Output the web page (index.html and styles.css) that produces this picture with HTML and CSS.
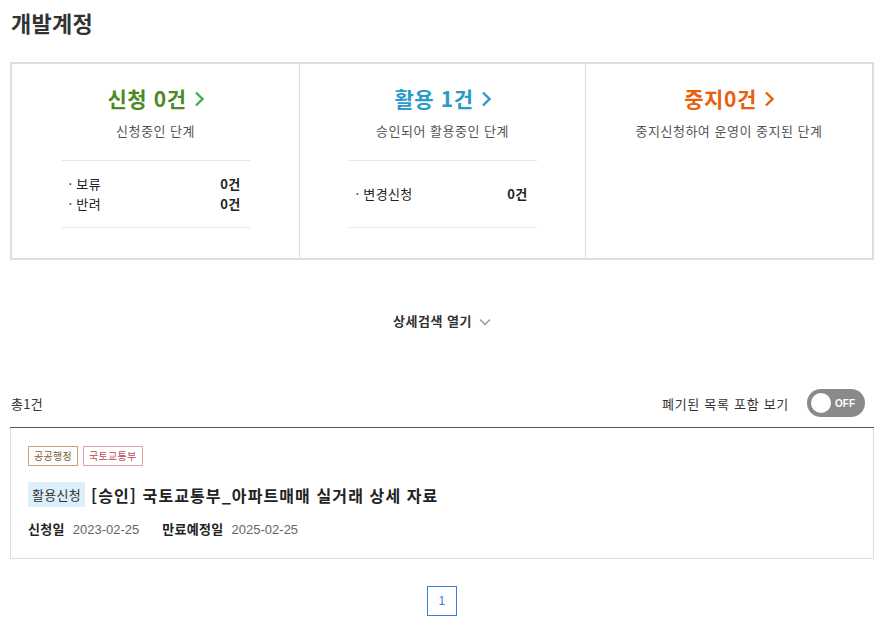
FILE: index.html
```html
<!DOCTYPE html>
<html lang="ko">
<head>
<meta charset="utf-8">
<title>개발계정</title>
<link rel="stylesheet" href="styles.css">
</head>
<body>
<div class="page">
  <h1 class="page-title">개발계정</h1>

  <div class="summary">
    <div class="col">
      <div class="col-title green">신청 0건<svg class="chev" viewBox="0 0 10 16" width="10" height="16"><polyline points="2,1.5 8.5,8 2,14.5" fill="none" stroke="currentColor" stroke-width="2.4"/></svg></div>
      <div class="col-sub">신청중인 단계</div>
      <div class="list">
        <div class="item"><span class="lbl">· 보류</span><span class="cnt">0건</span></div>
        <div class="item"><span class="lbl">· 반려</span><span class="cnt">0건</span></div>
      </div>
    </div>
    <div class="col">
      <div class="col-title blue">활용 1건<svg class="chev" viewBox="0 0 10 16" width="10" height="16"><polyline points="2,1.5 8.5,8 2,14.5" fill="none" stroke="currentColor" stroke-width="2.4"/></svg></div>
      <div class="col-sub">승인되어 활용중인 단계</div>
      <div class="list">
        <div class="item"><span class="lbl">· 변경신청</span><span class="cnt">0건</span></div>
      </div>
    </div>
    <div class="col">
      <div class="col-title orange">중지0건<svg class="chev" viewBox="0 0 10 16" width="10" height="16"><polyline points="2,1.5 8.5,8 2,14.5" fill="none" stroke="currentColor" stroke-width="2.4"/></svg></div>
      <div class="col-sub">중지신청하여 운영이 중지된 단계</div>
    </div>
  </div>

  <div class="search-open">상세검색 열기<svg class="down" viewBox="0 0 12 8" width="12" height="8"><polyline points="1,1.5 6,6.5 11,1.5" fill="none" stroke="#9a9a9a" stroke-width="1.5"/></svg></div>

  <div class="list-head">
    <div class="total">총1건</div>
    <div class="toggle-wrap">
      <span class="toggle-label">폐기된 목록 포함 보기</span>
      <span class="toggle"><span class="knob"></span><span class="toggle-text">OFF</span></span>
    </div>
  </div>

  <div class="card">
    <div class="tags">
      <span class="tag tag-a">공공행정</span>
      <span class="tag tag-b">국토교통부</span>
    </div>
    <div class="card-title">
      <span class="badge">활용신청</span>
      <span class="title-text">[승인] 국토교통부_아파트매매 실거래 상세 자료</span>
    </div>
    <div class="dates">
      <span class="d-lbl">신청일</span><span class="d-val">2023-02-25</span>
      <span class="d-lbl d-gap">만료예정일</span><span class="d-val">2025-02-25</span>
    </div>
  </div>

  <div class="pager"><span class="pg active">1</span></div>
</div>
</body>
</html>
```

FILE: styles.css
```css
* { box-sizing: border-box; }
html, body { margin: 0; padding: 0; background: #fff; }
body {
  font-family: "Noto Sans CJK KR", "Noto Sans", "Liberation Sans", sans-serif;
  color: #333;
  letter-spacing: 0.3px;
}
.page { padding: 0 15px 0 10px; }

.page-title {
  margin: 0;
  padding-top: 7px;
  height: 62px;
  font-size: 22px;
  font-weight: 700;
  line-height: 30px;
  color: #333;
  padding-left: 1px;
}

.summary {
  display: grid;
  grid-template-columns: 287px 286px 1fr;
  border: 2px solid #dedede;
  height: 198px;
}
.col {
  border-left: 1px solid #dedede;
  padding-top: 20px;
  display: flex;
  flex-direction: column;
  align-items: center;
}
.col:first-child { border-left: 0; }
.col-title {
  font-size: 21px;
  font-weight: 700;
  line-height: 28px;
  letter-spacing: 0.6px;
  display: flex;
  align-items: center;
  gap: 7px;
}
.col-title .chev { margin-top: 1px; }
.green { color: #4b8b26; }
.green .chev { color: #42b14a; }
.blue { color: #2a9ac9; }
.orange { color: #e8600c; }
.col-sub {
  margin-top: 9px;
  font-size: 13px;
  line-height: 20px;
  color: #555;
  letter-spacing: 0.5px;
}
.list {
  margin-top: 19px;
  width: 188px;
  height: 68px;
  border-top: 1px solid #e6e6e6;
  border-bottom: 1px solid #e6e6e6;
  display: flex;
  flex-direction: column;
  justify-content: center;
  padding: 0 9px 0 7px;
}
.item {
  display: flex;
  justify-content: space-between;
  font-size: 13px;
  line-height: 20px;
  color: #222;
}
.cnt { font-weight: 700; }

.search-open {
  margin-top: 51px;
  display: flex;
  justify-content: center;
  align-items: center;
  gap: 7px;
  font-size: 13px;
  font-weight: 700;
  line-height: 20px;
  color: #333;
  letter-spacing: 0.5px;
}
.search-open .down { margin-top: 1px; }

.list-head {
  margin-top: 58px;
  display: flex;
  justify-content: space-between;
  align-items: center;
  padding-bottom: 10px;
  border-bottom: 1px solid #555;
}
.total { font-size: 13px; color: #333; padding-left: 1px; }
.toggle-wrap { display: flex; align-items: center; gap: 18px; padding-right: 9px; }
.toggle-label { font-size: 13px; color: #333; letter-spacing: 0.7px; }
.toggle {
  width: 58px;
  height: 28px;
  border-radius: 14px;
  background: #8a8a8a;
  display: flex;
  align-items: center;
  padding: 0 4px;
  gap: 4px;
  letter-spacing: 0;
}
.knob {
  width: 20px;
  height: 20px;
  border-radius: 50%;
  background: #fff;
}
.toggle-text {
  font-family: "Liberation Sans", sans-serif;
  font-size: 10px;
  font-weight: 700;
  color: #fff;
}

.card {
  border: 1px solid #dedede;
  border-top: 0;
  padding: 18px 17px 19px;
}
.tags { display: flex; gap: 5px; }
.tag {
  font-size: 10px;
  line-height: 18px;
  height: 20px;
  padding: 0 5px;
  border: 1px solid;
}
.tag-a { border-color: #c8a56a; color: #7a5c2a; }
.tag-b { border-color: #e4a0a8; color: #c0485a; }
.card-title {
  margin-top: 16px;
  display: flex;
  align-items: center;
  gap: 6px;
}
.badge {
  background: #dcf0fb;
  font-size: 13px;
  line-height: 25px;
  padding: 0 4px 0 4px;
  color: #333;
}
.title-text { font-size: 16px; font-weight: 700; color: #222; letter-spacing: 1.1px; }
.dates {
  margin-top: 13px;
  display: flex;
  align-items: baseline;
  line-height: 18px;
}
.d-lbl { font-size: 13px; font-weight: 700; color: #222; margin-right: 8px; }
.d-val { font-size: 13px; color: #666; font-family: "Liberation Sans", sans-serif; letter-spacing: 0; }
.d-gap { margin-left: 23px; }

.pager {
  margin-top: 27px;
  display: flex;
  justify-content: center;
}
.pg {
  width: 30px;
  height: 30px;
  display: flex;
  align-items: center;
  justify-content: center;
  font-size: 12px;
  font-family: "Liberation Sans", sans-serif;
}
.pg.active { border: 1px solid #3b7dd8; color: #3b7dd8; }
```
